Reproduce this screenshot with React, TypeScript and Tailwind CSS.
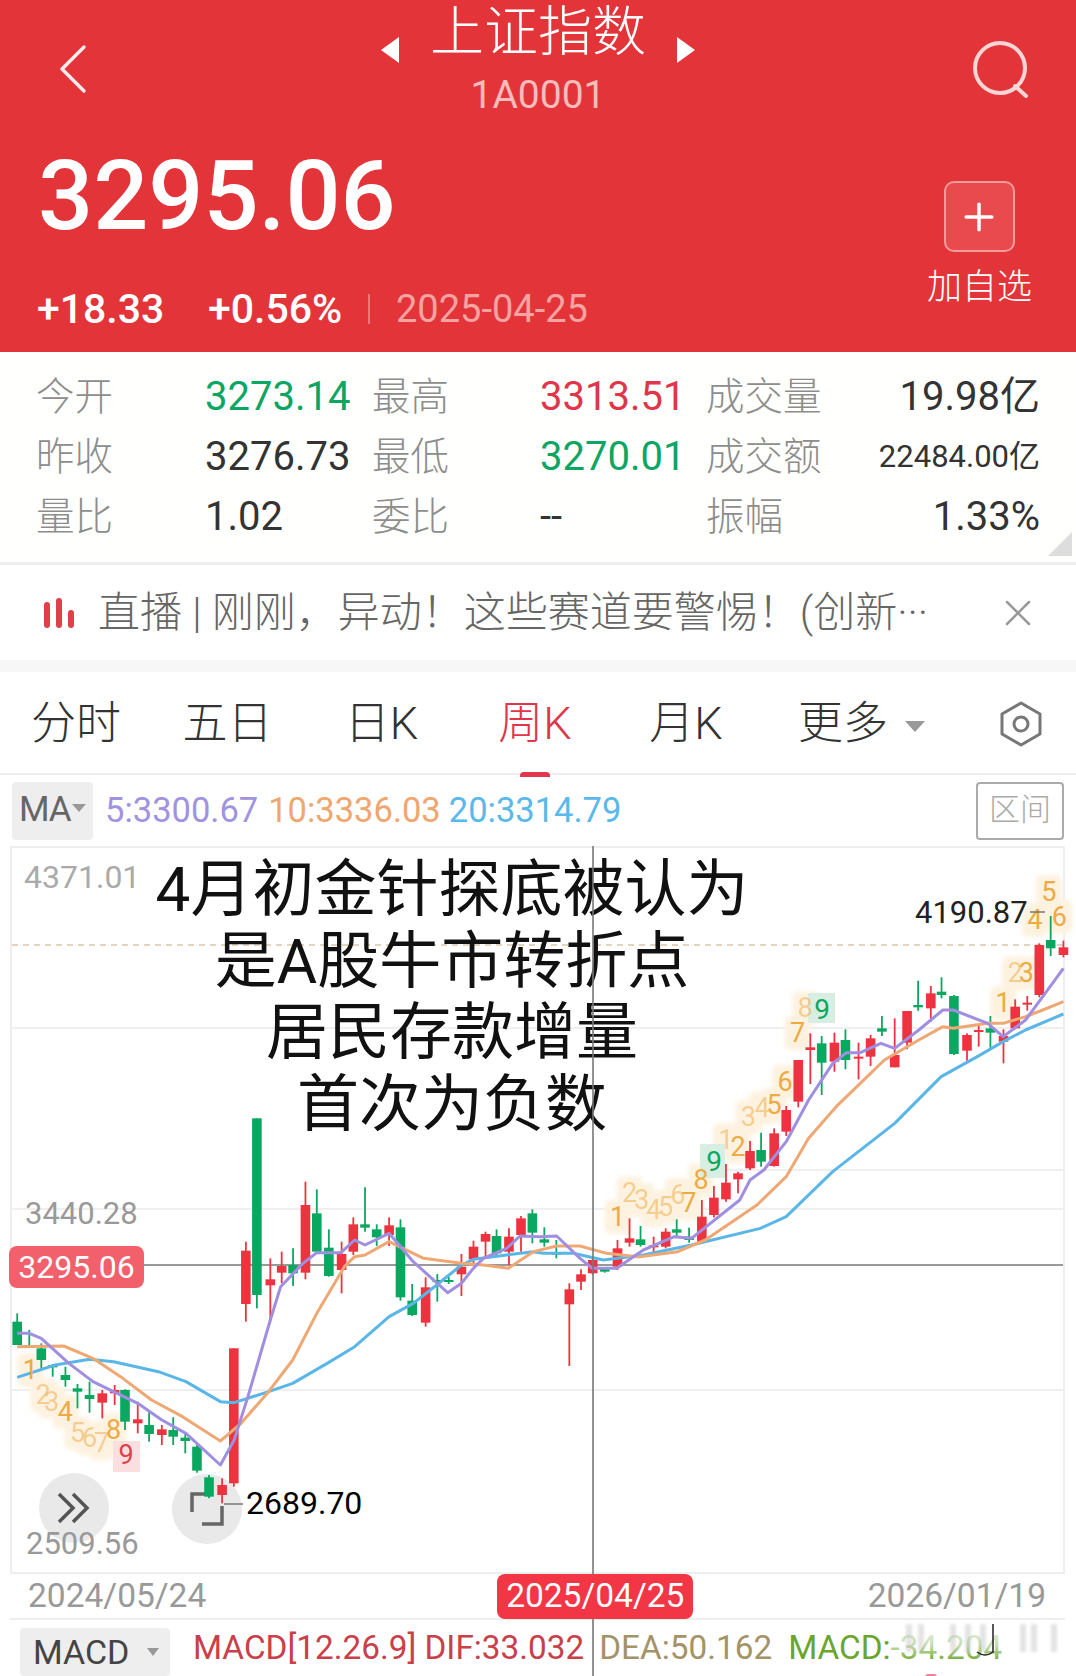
import { Plus, X } from 'lucide-react'

type Candle = [number, number, number, number, number, 'r' | 'g']
type Pt = [number, number]

const RED = '#ed3340'
const GREEN = '#0aa760'

// sampled from crops, converted to page coords below
const fromLeft = (x: number, y: number): Pt => [x / 2.904, 1080 + y / 3]
const fromMid = (x: number, y: number): Pt => [440 + x / 3, 1140 + y / 3]
const fromRight = (x: number, y: number): Pt => [540 + x / 2.904, 860 + y / 3]

const leftCandles: Candle[] = [
  [50, 725, 795, 700, 795, 'g'], [85, 795, 800, 750, 800, 'g'], [120, 805, 840, 790, 870, 'g'], [153, 856, 860, 852, 890, 'g'],
  [190, 885, 900, 860, 920, 'g'], [225, 925, 935, 912, 985, 'g'], [260, 945, 957, 905, 998, 'g'], [297, 940, 968, 930, 1015, 'r'],
  [333, 930, 940, 915, 975, 'r'], [363, 930, 1025, 928, 1050, 'g'], [400, 1018, 1030, 965, 1060, 'r'], [433, 1035, 1062, 995, 1085, 'g'],
  [470, 1048, 1065, 1035, 1095, 'r'], [503, 1050, 1070, 1012, 1095, 'g'], [538, 1073, 1083, 1060, 1120, 'g'], [572, 1100, 1172, 1095, 1178, 'g'],
  [607, 1192, 1250, 1185, 1255, 'g'], [645, 1215, 1245, 1195, 1270, 'r'], [679, 805, 1210, 805, 1220, 'r'], [714, 512, 672, 485, 725, 'r'],
  [746, 115, 645, 115, 685, 'g'], [785, 598, 616, 535, 725, 'r'], [818, 558, 578, 515, 610, 'r'], [851, 555, 580, 505, 618, 'g'],
  [887, 375, 578, 305, 598, 'r'], [920, 400, 515, 328, 520, 'g'], [955, 503, 588, 448, 590, 'g'], [992, 522, 570, 485, 640, 'r'],
  [1026, 433, 515, 412, 525, 'r'], [1060, 433, 443, 322, 455, 'g'], [1094, 448, 472, 433, 498, 'g'], [1130, 436, 465, 412, 498, 'r'],
  [1163, 442, 652, 418, 662, 'g'], [1197, 662, 705, 612, 708, 'g'], [1236, 622, 728, 592, 740, 'r'], [1270, 600, 606, 582, 665, 'g'],
  [1303, 600, 606, 590, 612, 'g'], [1340, 560, 583, 522, 648, 'r'], [1375, 500, 538, 482, 552, 'r'], [1410, 462, 485, 455, 535, 'r'],
  [1442, 468, 520, 448, 525, 'g'], [1478, 470, 515, 445, 555, 'r'], [1513, 415, 465, 408, 515, 'r'], [1546, 400, 458, 388, 490, 'g'],
]

const midCandles: Candle[] = [
  [313, 298, 308, 262, 320, 'g'], [349, 338, 342, 300, 355, 'g'], [388, 448, 493, 430, 678, 'r'], [423, 403, 425, 388, 450, 'r'],
]

const rightCandles: Candle[] = [
  [153, 1200, 1240, 1196, 1244, 'r'], [188, 1225, 1235, 1222, 1238, 'g'], [225, 1165, 1220, 1140, 1230, 'r'], [260, 1135, 1148, 1075, 1160, 'r'],
  [292, 1138, 1155, 1098, 1160, 'g'], [330, 1156, 1160, 1130, 1180, 'r'], [365, 1115, 1160, 1105, 1165, 'r'], [397, 1108, 1118, 1078, 1130, 'g'],
  [433, 1130, 1140, 1103, 1148, 'g'], [470, 1070, 1145, 1020, 1150, 'r'], [505, 1013, 1065, 978, 1072, 'r'], [540, 968, 1018, 912, 1025, 'r'],
  [575, 940, 958, 935, 1000, 'r'], [610, 873, 925, 843, 930, 'r'], [642, 870, 905, 818, 920, 'g'], [680, 820, 918, 805, 920, 'r'],
  [715, 750, 815, 738, 828, 'r'], [750, 600, 725, 600, 742, 'r'], [785, 562, 570, 520, 672, 'r'], [818, 550, 608, 528, 705, 'g'],
  [855, 548, 605, 518, 635, 'r'], [887, 540, 600, 508, 628, 'g'], [925, 590, 596, 548, 658, 'r'], [960, 535, 590, 525, 618, 'r'],
  [993, 505, 515, 468, 528, 'g'], [1030, 585, 622, 475, 622, 'r'], [1066, 453, 548, 453, 568, 'r'], [1098, 435, 442, 362, 452, 'g'],
  [1135, 400, 445, 378, 485, 'r'], [1166, 395, 405, 352, 415, 'g'], [1202, 408, 582, 405, 585, 'g'], [1240, 525, 572, 520, 602, 'r'],
  [1274, 510, 516, 495, 560, 'r'], [1308, 505, 518, 468, 565, 'g'], [1346, 528, 545, 508, 610, 'r'], [1380, 440, 505, 418, 508, 'r'],
  [1415, 428, 434, 408, 452, 'r'], [1450, 255, 405, 250, 412, 'r'], [1483, 240, 265, 168, 288, 'g'], [1520, 262, 285, 242, 292, 'r'],
]

const purple: Pt[] = [
  ...([[50, 760], [85, 760], [120, 775], [200, 850], [270, 905], [330, 935], [400, 970], [470, 1020], [540, 1060], [640, 1155], [680, 1080], [720, 950], [785, 720], [815, 620], [880, 550], [920, 518], [990, 518], [1030, 480], [1060, 495], [1130, 460], [1200, 545], [1300, 638], [1340, 610]] as Pt[]).map(([x, y]) => fromLeft(x, y)),
  ...([[100, 385], [130, 355], [200, 325], [240, 288], [300, 290], [350, 288], [420, 355], [457, 385], [530, 385]] as Pt[]).map(([x, y]) => fromMid(x, y)),
  ...([[300, 1170], [390, 1130], [440, 1135], [580, 1020], [610, 960], [650, 930], [715, 845], [780, 720], [850, 610], [890, 578], [930, 578], [990, 550], [1030, 565], [1100, 510], [1170, 450], [1200, 450], [1300, 490], [1345, 530], [1410, 480], [1460, 410], [1520, 325]] as Pt[]).map(([x, y]) => fromRight(x, y)),
]

const orange: Pt[] = [
  ...([[50, 800], [185, 798], [270, 835], [350, 890], [440, 960], [530, 1010], [640, 1083], [700, 1030], [780, 935], [850, 840], [920, 700], [1000, 560], [1030, 530], [1060, 525], [1130, 485], [1230, 535], [1340, 550]] as Pt[]).map(([x, y]) => fromLeft(x, y)),
  ...([[130, 375], [205, 385], [280, 335], [350, 318], [420, 318], [500, 340], [590, 350]] as Pt[]).map(([x, y]) => fromMid(x, y)),
  ...([[290, 1190], [400, 1175], [480, 1140], [630, 1035], [715, 950], [780, 835], [860, 740], [930, 670], [1000, 600], [1100, 540], [1170, 500], [1200, 505], [1300, 490], [1345, 490], [1410, 470], [1460, 450], [1520, 425]] as Pt[]).map(([x, y]) => fromRight(x, y)),
]

const blue: Pt[] = [
  ...([[50, 892], [160, 855], [260, 838], [330, 845], [460, 875], [540, 905], [640, 965], [680, 968], [780, 935], [850, 910], [950, 850], [1030, 800], [1130, 710], [1200, 670], [1250, 630], [1340, 555]] as Pt[]).map(([x, y]) => fromLeft(x, y)),
  ...([[100, 358], [200, 345], [280, 335], [310, 340], [400, 340], [490, 360]] as Pt[]).map(([x, y]) => fromMid(x, y)),
  ...([[300, 1185], [440, 1155], [640, 1105], [715, 1070], [850, 935], [1030, 790], [1165, 650], [1270, 590], [1345, 545], [1410, 510], [1520, 462]] as Pt[]).map(([x, y]) => fromRight(x, y)),
]

// TD sequence numbers: page point, digit, faded or not
const tdNums: [Pt, string, boolean][] = [
  [fromLeft(88, 870), '1', false], [fromLeft(125, 945), '2', true], [fromLeft(150, 965), '3', true], [fromLeft(190, 995), '4', false],
  [fromLeft(225, 1060), '5', true], [fromLeft(260, 1075), '6', true], [fromLeft(295, 1090), '7', true], [fromLeft(330, 1050), '8', false],
  [fromRight(225, 1070), '1', false], [fromRight(260, 1000), '2', true], [fromRight(295, 1020), '3', true], [fromRight(330, 1050), '4', true],
  [fromRight(365, 1040), '5', true], [fromRight(400, 1005), '6', true], [fromRight(432, 1030), '7', false], [fromRight(468, 960), '8', false],
  [fromRight(540, 840), '1', true], [fromRight(575, 860), '2', false], [fromRight(605, 770), '3', true], [fromRight(645, 745), '4', true],
  [fromRight(680, 735), '5', false], [fromRight(712, 665), '6', false], [fromRight(748, 520), '7', false], [fromRight(770, 445), '8', true],
  [fromRight(1345, 430), '1', false], [fromRight(1380, 340), '2', true], [fromRight(1412, 340), '3', false], [fromRight(1437, 180), '4', false],
  [fromRight(1478, 95), '5', false], [fromRight(1508, 170), '6', false],
]

const toPoints = (pts: Pt[]) => pts.map(([x, y]) => `${x},${y}`).join(' ')

function Candles({ list, conv }: { list: Candle[]; conv: (x: number, y: number) => Pt }) {
  return (
    <>
      {list.map(([x, top, bot, hi, lo, c], i) => {
        const [px, t] = conv(x, top)
        const [, b] = conv(x, bot)
        const [, h] = conv(x, hi)
        const [, l] = conv(x, lo)
        const color = c === 'r' ? RED : GREEN
        return (
          <g key={i}>
            <line x1={px} x2={px} y1={h} y2={l} stroke={color} strokeWidth={1.8} />
            <rect x={px - 4.8} y={t} width={9.6} height={Math.max(b - t, 2)} fill={color} />
          </g>
        )
      })}
    </>
  )
}

function Chart() {
  return (
    <svg className="absolute inset-0 overflow-visible" width={1051} height={724} viewBox="12 848 1051 724">
      <g stroke="#efefef" strokeWidth={2}>
        <line x1={12} x2={1063} y1={1028} y2={1028} />
        <line x1={12} x2={1063} y1={1209} y2={1209} />
        <line x1={12} x2={1063} y1={1390} y2={1390} />
        <line x1={700} x2={1063} y1={1170} y2={1170} />
      </g>
      <line x1={12} x2={1063} y1={945} y2={945} stroke="#d8c8a8" strokeWidth={1.5} strokeDasharray="6 5" />
      <line x1={12} x2={1063} y1={1265} y2={1265} stroke="#777" strokeWidth={1.5} />
      <g className="blur-[2px]">
        {tdNums.map(([[x, y]], i) => (
          <rect key={i} x={x - 13} y={y - 17} width={26} height={34} rx={6} fill="#fdf2e0" />
        ))}
      </g>
      <rect x={113} y={1441} width={27} height={31} fill="#fbdfe0" />
      <rect x={808} y={993} width={27} height={30} fill="#d9eee2" />
      <rect x={700} y={1144} width={25} height={34} fill="#d9eee2" />
      <Candles list={leftCandles} conv={fromLeft} />
      <Candles list={midCandles} conv={fromMid} />
      <Candles list={rightCandles} conv={fromRight} />
      <polyline points={toPoints(blue)} fill="none" stroke="#5ab6e6" strokeWidth={3} strokeLinejoin="round" />
      <polyline points={toPoints(orange)} fill="none" stroke="#efa873" strokeWidth={3} strokeLinejoin="round" />
      <polyline points={toPoints(purple)} fill="none" stroke="#a08fe0" strokeWidth={3} strokeLinejoin="round" />
      <g fontFamily="Roboto, sans-serif" fontSize={27} textAnchor="middle" dominantBaseline="central">
        {tdNums.map(([[x, y], d, faded], i) => (
          <text key={i} x={x} y={y} fill="#eeaa44" opacity={faded ? 0.5 : 1}>{d}</text>
        ))}
        <text x={126} y={1455} fill="#e0404a">9</text>
        <text x={822} y={1009} fill={GREEN} fontSize={28}>9</text>
        <text x={714} y={1161} fill={GREEN} fontSize={28}>9</text>
      </g>
      <line x1={224} x2={243} y1={1504} y2={1504} stroke="#777" strokeWidth={1.5} />
      <line x1={1030} x2={1045} y1={912} y2={912} stroke="#777" strokeWidth={1.5} />
    </svg>
  )
}

function ChartLabel({ x, y, className, children }: { x: number; y: number; className: string; children: string }) {
  // x, y are page coords of the left edge and vertical centre
  return (
    <span className={`absolute leading-none -translate-y-1/2 ${className}`} style={{ left: x - 12, top: y - 848 }}>
      {children}
    </span>
  )
}

const stats = [
  ['今开', '3273.14', 'text-[#0ba564]', '最高', '3313.51', 'text-[#e0354a]', '成交量', '19.98亿', 'text-[40px]'],
  ['昨收', '3276.73', 'text-[#333]', '最低', '3270.01', 'text-[#0ba564]', '成交额', '22484.00亿', 'text-[31px]'],
  ['量比', '1.02', 'text-[#333]', '委比', '--', 'text-[#333]', '振幅', '1.33%', 'text-[40px]'],
]

const tabs = [
  { label: '分时', w: 'w-[152px]' },
  { label: '五日', w: 'w-[151px]' },
  { label: '日K', w: 'w-[157px]' },
  { label: '周K', w: 'w-[150px]' },
  { label: '月K', w: 'w-[152px]' },
]

export default function App() {
  return (
    <div className="relative w-[1076px] h-[1676px] overflow-hidden bg-white font-['Roboto','Noto_Sans_CJK_SC',sans-serif]">
      <header className="h-[352px] bg-[#e33539] text-white px-[36px] flex flex-col">
        <div className="h-[130px] flex justify-between items-start">
          <div className="w-[67px] pl-[22px] pt-[44px]">
            <svg width={30} height={50} viewBox="0 0 30 50" fill="none" stroke="#fdeaea" strokeWidth={3.5} strokeLinecap="round" strokeLinejoin="round">
              <path d="M26 3 L4 25 L26 47" />
            </svg>
          </div>
          <div className="flex flex-col items-center">
            <div className="flex items-center gap-[31px]">
              <span className="w-0 h-0 mt-[34px] border-y-[13px] border-y-transparent border-r-[18px] border-r-white" />
              <span className="text-[54px] leading-[66px] font-light">上证指数</span>
              <span className="w-0 h-0 mt-[34px] border-y-[13px] border-y-transparent border-l-[18px] border-l-white" />
            </div>
            <span className="text-[39px] leading-[46px] text-[#f7bcbc] mt-[6px]">1A0001</span>
          </div>
          <div className="w-[67px] pt-[40px]">
            <svg width={57} height={58} viewBox="0 0 57 58" fill="none" stroke="#f9d5d5" strokeWidth={4}>
              <circle cx={27} cy={28} r={25} />
              <path d="M42 46 L53 56" strokeLinecap="round" />
            </svg>
          </div>
        </div>
        <div className="flex justify-between">
          <div className="flex flex-col">
            <span className="text-[97px] leading-[110px] font-medium mt-[11px] ml-[2px]">3295.06</span>
            <div className="flex items-center mt-[35px] ml-[1px] leading-[46px]">
              <span className="text-[41px] font-medium w-[171px]">+18.33</span>
              <span className="text-[41px] font-medium w-[160px]">+0.56%</span>
              <span className="w-[2px] h-[30px] bg-[#ee7878]" />
              <span className="ml-[26px] text-[38px] text-[#f5a3a3]">2025-04-25</span>
            </div>
          </div>
          <div className="flex flex-col items-center mt-[51px] mr-[8px]">
            <div className="w-[71px] h-[71px] rounded-[10px] border-2 border-[#f49b9b] bg-[#e84a4e] flex items-center justify-center">
              <Plus size={44} strokeWidth={3.5} absoluteStrokeWidth />
            </div>
            <span className="text-[35px] leading-[40px] mt-[16px] font-light">加自选</span>
          </div>
        </div>
      </header>

      <section className="relative h-[213px] border-b-[3px] border-[#eee] px-[36px] py-[15px] bg-[#fffffd]">
        <div className="grid grid-cols-[169px_167px_168px_166px_154px_180px] auto-rows-[60px] items-center">
          {stats.map((r) => (
            <div key={r[0]} className="contents">
              <span className="text-[38.5px] font-light text-[#8d8d8d]">{r[0]}</span>
              <span className={`text-[40px] ${r[2]}`}>{r[1]}</span>
              <span className="text-[38.5px] font-light text-[#8d8d8d]">{r[3]}</span>
              <span className={`text-[40px] ${r[5]}`}>{r[4]}</span>
              <span className="text-[38.5px] font-light text-[#8d8d8d]">{r[6]}</span>
              <span className={`text-right text-[#333] ${r[8]}`}>{r[7]}</span>
            </div>
          ))}
        </div>
        <span className="absolute right-[4px] bottom-[6px] w-0 h-0 border-l-[24px] border-l-transparent border-b-[24px] border-b-[#ddd]" />
      </section>

      <section className="h-[95px] flex items-center pl-[44px] pr-[36px]">
        <div className="flex items-end gap-[6px] h-[30px] mr-[24px]">
          <span className="w-[6px] h-[26px] rounded-full bg-[#e0404a]" />
          <span className="w-[6px] h-[30px] rounded-full bg-[#e0404a]" />
          <span className="w-[6px] h-[18px] rounded-full bg-[#e0404a]" />
        </div>
        <span className="text-[42px] font-light text-[#666] whitespace-nowrap flex-1">直播 | 刚刚，异动！这些赛道要警惕！(创新···</span>
        <X className="text-[#999]" size={44} strokeWidth={2.5} absoluteStrokeWidth />
      </section>

      <div className="h-[12px] bg-[#f7f7f7]" />

      <nav className="h-[103px] border-b-2 border-[#eee] flex items-center pt-[2px] text-[45px] font-light text-[#333]">
        {tabs.map((t) => (
          <span key={t.label} className={`relative text-center ${t.w} ${t.label === '周K' ? 'text-[#e0354a]' : ''}`}>
            {t.label}
            {t.label === '周K' && <span className="absolute left-[60px] bottom-[-20px] w-[30px] h-[5px] bg-[#e0354a] rounded-t" />}
          </span>
        ))}
        <span className="w-[126px] text-right">更多</span>
        <span className="ml-[17px] mt-[6px] w-0 h-0 border-x-[10px] border-x-transparent border-t-[11px] border-t-[#999]" />
        <svg className="ml-[75px] mr-[34px]" width={42} height={46} viewBox="0 0 42 46" fill="none" stroke="#777" strokeWidth={3}>
          <path d="M21 2 L40 13 V33 L21 44 L2 33 V13 Z" strokeLinejoin="round" />
          <circle cx={21} cy={23} r={7} />
        </svg>
      </nav>

      <div className="h-[71px] flex items-center pl-[12px] pr-[12px] text-[34.5px]">
        <div className="w-[81px] h-[58px] bg-[#eee] rounded-[4px] flex items-center pl-[7px] text-[#666]">
          <span className="text-[35px] tracking-[-1px]">MA</span>
          <span className="ml-[1px] mb-[6px] w-0 h-0 border-x-[7px] border-x-transparent border-t-[8px] border-t-[#999]" />
        </div>
        <span className="ml-[12px] text-[#a193e0]">5:3300.67</span>
        <span className="ml-[10px] text-[#efa66f]">10:3336.03</span>
        <span className="ml-[8px] text-[#5ab9ea]">20:3314.79</span>
        <span className="ml-auto w-[88px] h-[58px] border-2 border-[#aaa] rounded-[4px] flex items-center justify-center text-[31px] font-light text-[#aaa]">区间</span>
      </div>

      <div className="ml-[10px] w-[1055px] h-[726px] border-x-2 border-t-2 border-[#eee]">
        <div className="relative w-full h-full">
          <div className="absolute left-[27px] top-[625px] w-[70px] h-[70px] rounded-full bg-[#e9e9e9] flex items-center justify-center">
            <svg width={34} height={32} viewBox="0 0 34 32" fill="none" stroke="#555" strokeWidth={3.5}>
              <path d="M2 2 L16 16 L2 30 M16 2 L30 16 L16 30" />
            </svg>
          </div>
          <div className="absolute left-[160px] top-[626px] w-[70px] h-[70px] rounded-full bg-[#e9e9e9] flex items-center justify-center">
            <svg width={34} height={34} viewBox="0 0 34 34" fill="none" stroke="#666" strokeWidth={3.5}>
              <path d="M2 20 V2 H20 M32 14 V32 H12" />
            </svg>
          </div>
          <Chart />
          <ChartLabel x={24} y={877} className="text-[32px] text-[#aaa]">4371.01</ChartLabel>
          <ChartLabel x={25} y={1213} className="text-[31px] text-[#999]">3440.28</ChartLabel>
          <ChartLabel x={26} y={1543} className="text-[31px] text-[#999]">2509.56</ChartLabel>
          <ChartLabel x={246} y={1503} className="text-[32px] text-black">2689.70</ChartLabel>
          <ChartLabel x={915} y={912} className="text-[31px] text-[#222]">4190.87</ChartLabel>
          <span className="absolute left-[-3px] top-[398px] w-[135px] h-[42px] rounded-[8px] bg-[#f2606b] text-white text-[32px] flex items-center justify-center">3295.06</span>
          <p className="absolute left-[118px] top-[6px] w-[644px] text-center text-[62px] leading-[71.5px] text-[#111]">
            4月初金针探底被认为<br />是A股牛市转折点<br />居民存款增量<br />首次为负数
          </p>
        </div>
      </div>

      <div className="h-[48px] border-y-2 border-[#eee] ml-[10px] w-[1055px] flex items-center pl-[18px] text-[33.5px] text-[#999]">
        <span>2024/05/24</span>
        <span className="relative z-10 ml-[291px] w-[196px] h-[45px] rounded-[8px] bg-[#f23645] text-white flex items-center justify-center">2025/04/25</span>
        <span className="ml-auto mr-[19px]">2026/01/19</span>
      </div>

      <div className="relative h-[56px] flex items-center pl-[20px] text-[33.3px] whitespace-nowrap">
        <div className="w-[150px] h-[48px] mt-[8px] bg-[#eee] rounded-[4px] flex items-center pl-[13px] text-[#444]">
          <span className="text-[34px]">MACD</span>
          <span className="ml-[18px] w-0 h-0 border-x-[6px] border-x-transparent border-t-[8px] border-t-[#999]" />
        </div>
        <span className="ml-[23px] text-[#c9404a]">MACD[12.26.9] DIF:33.032</span>
        <span className="ml-[15px] text-[#a59368]">DEA:50.162</span>
        <span className="ml-[16px] text-[#6aa62e]">MACD:-34.204</span>
        <span className="absolute left-[925px] bottom-[-4px] w-[12px] h-[6px] rounded-full bg-[#e0506a] opacity-70" />
      </div>

      {/* crosshair runs through chart and both rows below it */}
      <span className="absolute left-[592px] top-[846px] bottom-0 w-[2px] bg-[#777] opacity-80" />

      {/* watermark smeared over the bottom corner */}
      <svg className="absolute left-[890px] top-[1622px]" width={186} height={54} viewBox="0 0 186 54">
        <defs>
          <linearGradient id="fade" x1="0" x2="0" y1="0" y2="1">
            <stop offset="0" stopColor="#fff" stopOpacity={0.95} />
            <stop offset="0.6" stopColor="#fff" stopOpacity={0.6} />
            <stop offset="1" stopColor="#fff" stopOpacity={0} />
          </linearGradient>
        </defs>
        <rect x={0} y={0} width={186} height={40} fill="url(#fade)" />
        {[16, 28, 60, 75, 90, 130, 141, 161].map((x) => (
          <rect key={x} x={x} y={2} width={6} height={28} fill="#bbb" opacity={0.4} className="blur-[1.5px]" />
        ))}
        <path d="M87 30 Q95 36 103 30 V2" fill="none" stroke="#222" strokeWidth={1.5} />
      </svg>
    </div>
  )
}
